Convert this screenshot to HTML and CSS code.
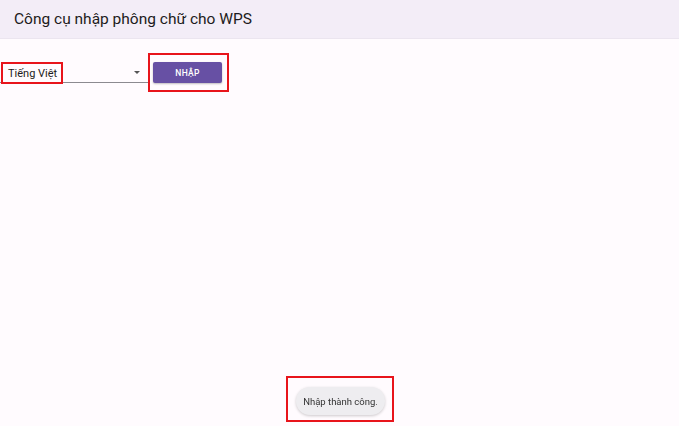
FILE: index.html
```html
<!DOCTYPE html>
<html lang="vi">

<head>
    <meta charset="UTF-8">
    <meta name="viewport" content="width=device-width, initial-scale=1.0">
    <title>Công cụ nhập phông chữ cho WPS</title>
    <link rel="stylesheet" href="styles.css">
</head>

<body>
    <header class="app-bar">
        <h1>Công cụ nhập phông chữ cho WPS</h1>
    </header>

    <main class="content">
        <div class="toolbar">
            <div class="select">
                <span class="select-label mark">Tiếng Việt</span>
                <span class="select-arrow"></span>
            </div>
            <div class="button-box mark">
                <button class="import-btn">NHẬP</button>
            </div>
        </div>
    </main>

    <div class="snackbar-box mark">
        <div class="snackbar">Nhập thành công.</div>
    </div>
</body>

</html>
```

FILE: styles.css
```css
body {
    margin: 0;
    font-family: Roboto, "Noto Sans", sans-serif;
    background-color: #fffbfe;
    color: #1d1b20;
    height: 426px;
    overflow: hidden;
}

.app-bar {
    height: 38px;
    display: flex;
    align-items: center;
    padding-left: 14px;
    background-color: #f3edf7;
    border-bottom: 1px solid #ebe5ef;
}

.app-bar h1 {
    margin: 0;
    font-size: 15.5px;
    font-weight: 400;
    color: #1d1b20;
}

.content {
    padding-top: 14px;
}

.toolbar {
    display: flex;
    align-items: center;
}

.mark {
    border: 2px solid #e8141b;
    box-sizing: border-box;
}

.select {
    width: 148px;
    height: 21px;
    box-sizing: border-box;
    display: flex;
    align-items: center;
    justify-content: space-between;
    border-bottom: 1px solid #8c8a90;
}

.select-label {
    align-self: flex-start;
    display: flex;
    align-items: center;
    height: 22px;
    width: 62px;
    margin-left: 1px;
    padding-left: 5px;
    font-size: 11px;
    color: #1d1b20;
}

.select-arrow {
    width: 0;
    height: 0;
    margin-right: 8px;
    border-left: 3.5px solid transparent;
    border-right: 3.5px solid transparent;
    border-top: 3.5px solid #555;
}

.button-box {
    padding: 7px 5px 7px 3px;
}

.import-btn {
    display: block;
    width: 69px;
    height: 21px;
    border: none;
    border-radius: 2px;
    background-color: #6750a4;
    color: #ffffff;
    font-family: Roboto, "Noto Sans", sans-serif;
    font-size: 8.5px;
    font-weight: 500;
    letter-spacing: 0.3px;
    box-shadow: 0 1px 2px rgba(0, 0, 0, 0.25);
}

.snackbar-box {
    position: fixed;
    left: 286px;
    bottom: 4px;
    padding: 9px 7px 5px 8px;
}

.snackbar {
    width: 89px;
    height: 28px;
    display: flex;
    align-items: center;
    justify-content: center;
    border-radius: 14px;
    background-color: #eeedf0;
    box-shadow: 0 1px 3px rgba(0, 0, 0, 0.2);
    font-size: 9.5px;
    color: #333;
}
```
